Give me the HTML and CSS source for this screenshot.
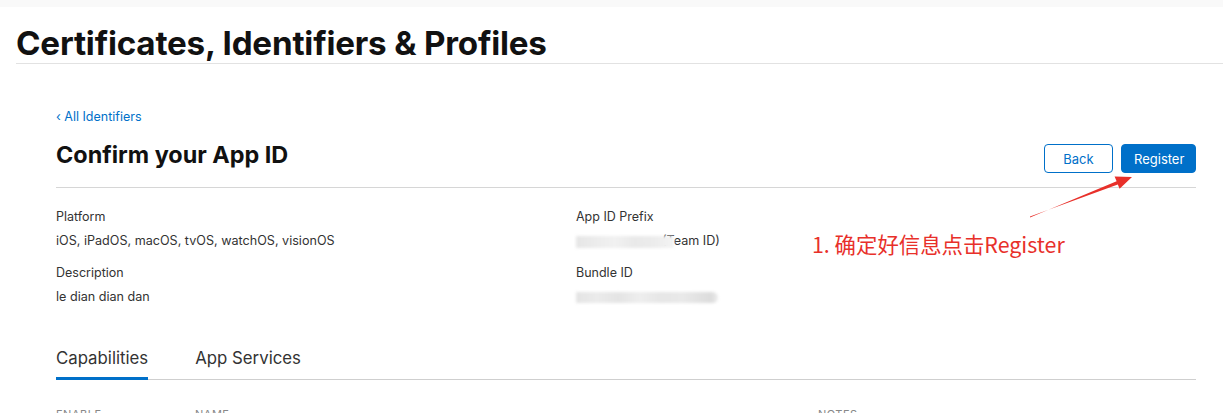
FILE: index.html
```html
<!DOCTYPE html>
<html lang="en">
<head>
<meta charset="utf-8">
<title>Certificates, Identifiers &amp; Profiles</title>
<link rel="stylesheet" href="styles.css">
</head>
<body>
<div class="topbar"></div>
<header class="header">
  <h1 class="header-title">Certificates, Identifiers &amp; Profiles</h1>
</header>
<main class="content">
  <a class="back-link" href="#">&lsaquo; All Identifiers</a>
  <div class="title-row">
    <h2 class="page-title">Confirm your App ID</h2>
    <div class="actions">
      <button class="btn btn-secondary">Back</button>
      <button class="btn btn-primary">Register</button>
    </div>
  </div>
  <div class="info-grid">
    <div class="info-col">
      <div class="field">
        <div class="label">Platform</div>
        <div class="value">iOS, iPadOS, macOS, tvOS, watchOS, visionOS</div>
      </div>
      <div class="field">
        <div class="label">Description</div>
        <div class="value">le dian dian dan</div>
      </div>
    </div>
    <div class="info-col">
      <div class="field">
        <div class="label">App ID Prefix</div>
        <div class="value"><span class="blur blur-prefix"></span>(Team ID)</div>
      </div>
      <div class="field">
        <div class="label">Bundle ID</div>
        <div class="value"><span class="blur blur-bundle"></span></div>
      </div>
    </div>
  </div>
  <nav class="tabs">
    <span class="tab tab-active">Capabilities</span>
    <span class="tab">App Services</span>
  </nav>
  <div class="table-head">
    <span class="th th-enable">ENABLE</span>
    <span class="th th-name">NAME</span>
    <span class="th th-notes">NOTES</span>
  </div>
</main>
<div class="annotation">1. 确定好信息点击Register</div>
<svg class="arrow" width="1223" height="413" viewBox="0 0 1223 413">
  <polygon fill="#e8302a" points="1030,217.4 1116.6,181.2 1114.6,176.6 1132,177 1119.6,188.8 1117.8,184.4 1030,216.6"/>
</svg>
</body>
</html>
```
FILE: styles.css
```css
* { box-sizing: border-box; }
html, body { margin: 0; padding: 0; background: #fff; }
body {
  font-family: Inter, "Noto Sans", "Liberation Sans", sans-serif;
  color: #333;
  width: 1223px;
  height: 413px;
  overflow: hidden;
  position: relative;
}
.topbar { height: 7px; background: #f9f9f9; }
.header { margin-left: 16px; border-bottom: 1px solid #e2e2e2; padding-top: 16px; }
.header-title {
  margin: 0;
  font-size: 33.2px;
  line-height: 40px;
  font-weight: 700;
  color: #111;
  letter-spacing: -0.2px;
}
.content { padding: 0 27px 0 56px; }
.back-link {
  display: block;
  margin-top: 45px;
  font-size: 12.5px;
  line-height: 16px;
  color: #0070c9;
  text-decoration: none;
}
.title-row {
  display: flex;
  justify-content: space-between;
  align-items: flex-start;
  margin-top: 16px;
  padding-bottom: 14px;
  border-bottom: 1px solid #d6d6d6;
}
.page-title {
  margin: 0;
  font-size: 23.4px;
  line-height: 28px;
  font-weight: 700;
  color: #111;
}
.actions { display: flex; gap: 8px; margin-top: 3px; }
.btn {
  font-family: inherit;
  font-size: 13px;
  height: 29px;
  border-radius: 4px;
  padding: 0 12px;
  cursor: pointer;
}
.btn-secondary { background: #fff; border: 1px solid #0070c9; color: #0070c9; width: 69px; }
.btn-primary { background: #0070c9; border: 1px solid #0070c9; color: #fff; width: 75px; }
.info-grid {
  display: grid;
  grid-template-columns: 520px 1fr;
  padding-top: 20px;
}
.field { margin-bottom: 14px; }
.label { font-size: 12.5px; line-height: 18px; color: #333; }
.value { font-size: 12.6px; line-height: 18px; margin-top: 6px; color: #333; height: 18px; }
.blur {
  display: inline-block;
  vertical-align: middle;
  filter: blur(1.5px);
  position: relative;
}
.blur-prefix {
  width: 98px;
  height: 12px;
  margin-right: -12px;
  background: linear-gradient(90deg, #e6e6e6 0%, #ececec 20%, #f1f1f1 40%, #e9e9e9 60%, #ececec 80%, #f4f4f4 100%);
}
.blur-bundle {
  width: 142px;
  height: 11px;
  border-radius: 0 6px 6px 0;
  background: linear-gradient(90deg, #e4e4e4 0%, #ebebeb 15%, #e4e4e4 30%, #eeeeee 45%, #e6e6e6 60%, #e9e9e9 75%, #dcdcdc 95%, #ececec 100%);
}
.tabs {
  display: flex;
  gap: 47px;
  margin-top: 26px;
  border-bottom: 1px solid #cfcfcf;
}
.tab {
  font-size: 16.8px;
  line-height: 24px;
  padding-bottom: 7px;
  color: #333;
  border-bottom: 3px solid transparent;
  margin-bottom: -1px;
}
.tab-active { border-bottom-color: #0070c9; }
.table-head {
  display: flex;
  margin-top: 27px;
  font-size: 11px;
  line-height: 14px;
  color: #888;
  letter-spacing: 0.5px;
}
.th-enable { width: 139px; }
.th-name { width: 623px; }
.annotation {
  position: absolute;
  left: 812px;
  top: 230px;
  font-family: "Noto Sans CJK SC", "Noto Sans", sans-serif;
  font-size: 21.4px;
  line-height: 28px;
  color: #e8302a;
  white-space: nowrap;
}
.arrow { position: absolute; left: 0; top: 0; pointer-events: none; }
```
